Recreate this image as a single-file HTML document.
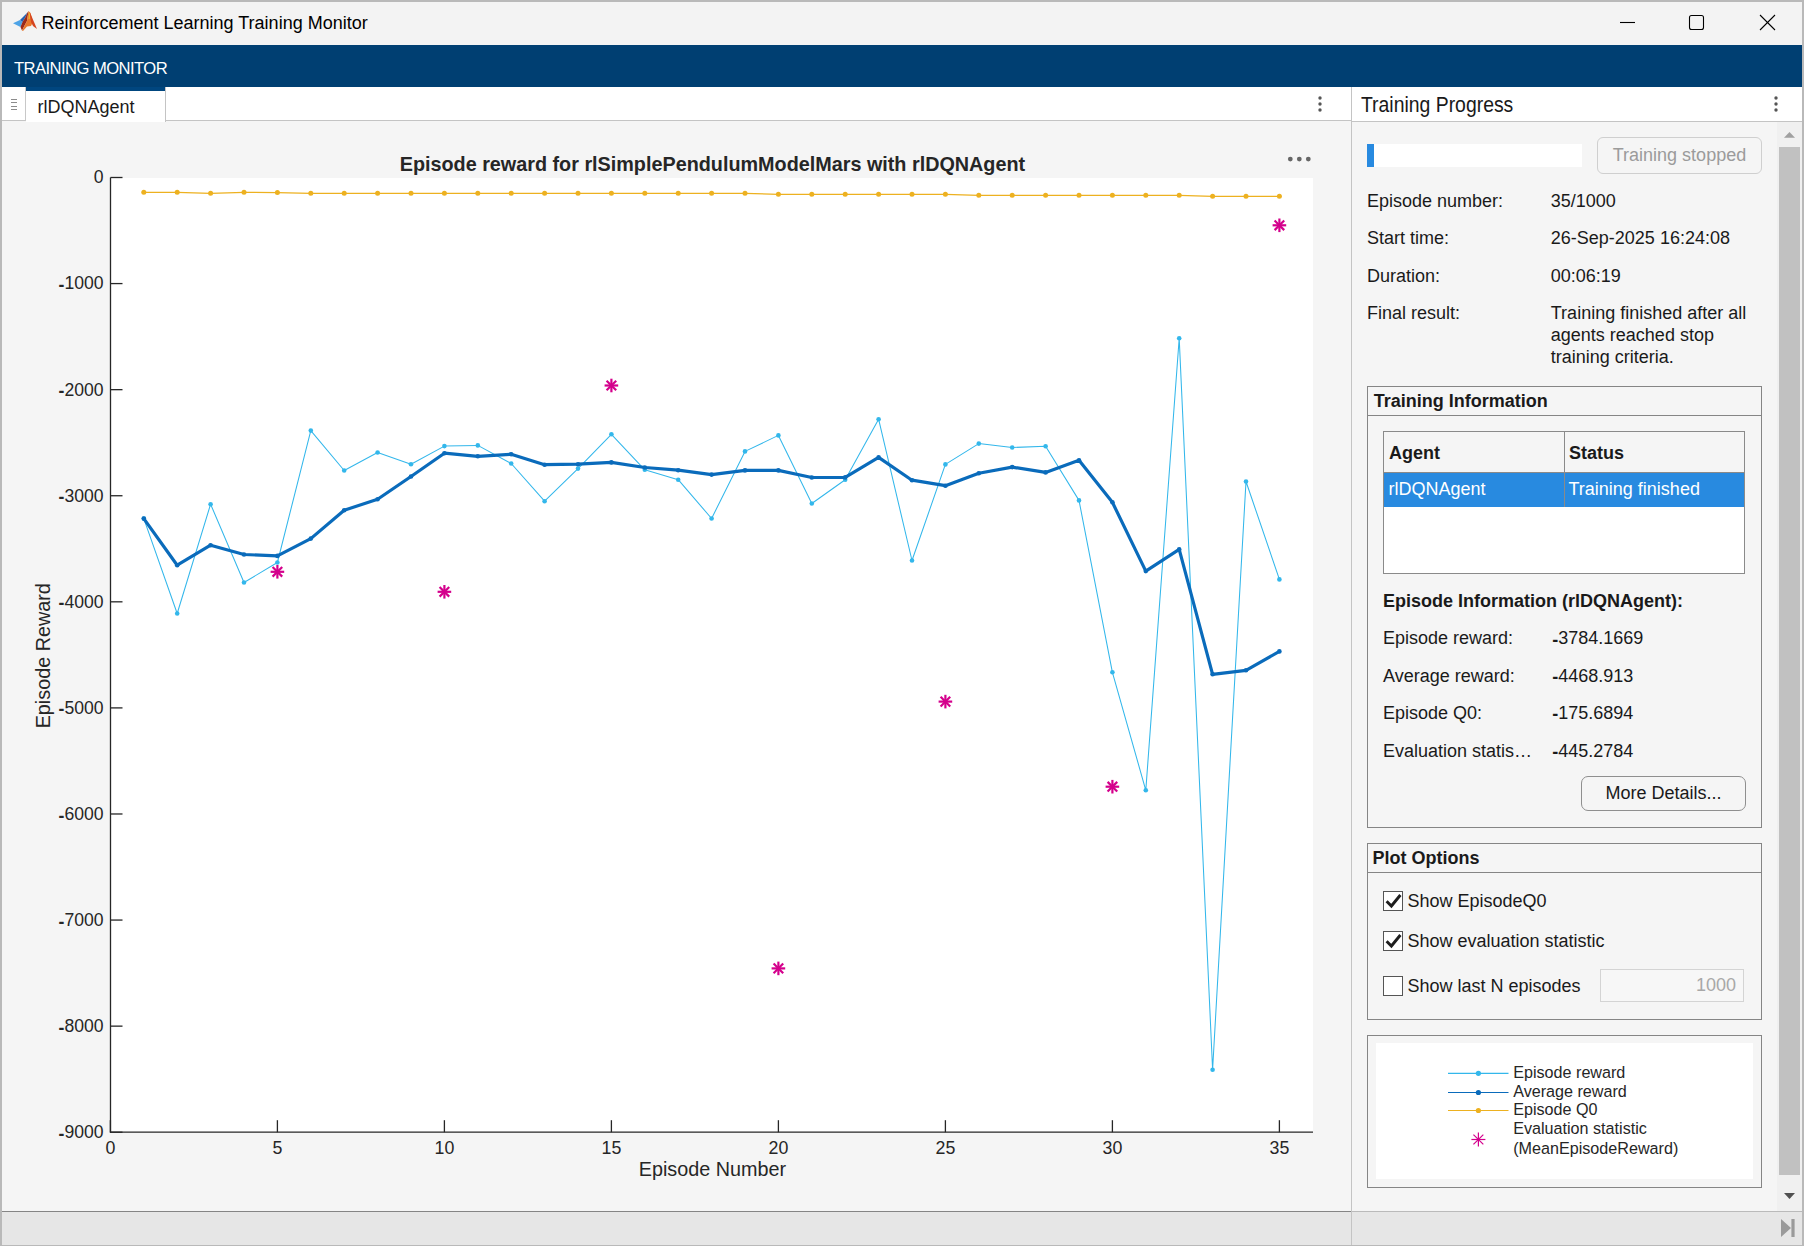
<!DOCTYPE html>
<html><head><meta charset="utf-8"><title>Reinforcement Learning Training Monitor</title>
<style>
html,body{margin:0;padding:0;width:1804px;height:1246px;overflow:hidden;background:#b9b9b9}
body{position:relative;font-family:"Liberation Sans", sans-serif}
.t{position:absolute;line-height:1;white-space:pre;font-family:"Liberation Sans", sans-serif}
.r{position:absolute}
</style></head><body>
<div class="r" style="left:0px;top:0px;width:1804px;height:1246px;background:#b9b9b9"></div>
<div class="r" style="left:2px;top:2px;width:1800px;height:1243px;background:#f5f5f5"></div>
<div class="r" style="left:2px;top:2px;width:1800px;height:43px;background:#f3f3f3"></div>
<svg class="r" style="left:12px;top:10px" width="27" height="23" viewBox="0 0 27 23">
<polygon points="1,13.3 8,10 10.5,12 8.5,17" fill="#4da3e6"/>
<polygon points="8,10 15.5,2.5 13,8 10.5,12" fill="#2563b5"/>
<polygon points="10.5,12 13,8 15.5,2.5 16.5,1 15,11 10,20.5 8.5,17" fill="#9c2a1a"/>
<polygon points="16.5,1 18.5,3 21,12 19,16 15,16.5 11,21 10,20.5 15,11" fill="#e9782c"/>
<polygon points="17,2 18,3.5 17.6,9 16.6,9" fill="#f5c431"/>
<polygon points="17.5,1.5 25,19 21,16 19,12" fill="#d5441f"/>
</svg>
<div class="t" style="left:41.50px;top:13.71px;font-size:18px;font-weight:400;color:#000;">Reinforcement Learning Training Monitor</div>
<svg class="r" style="left:1600px;top:0px" width="200" height="45">
<line x1="20" y1="22.5" x2="35" y2="22.5" stroke="#000" stroke-width="1.1"/>
<rect x="89.5" y="15.5" width="14" height="14" rx="2" ry="2" fill="none" stroke="#000" stroke-width="1.1"/>
<line x1="160" y1="15" x2="175" y2="30" stroke="#000" stroke-width="1.1"/>
<line x1="175" y1="15" x2="160" y2="30" stroke="#000" stroke-width="1.1"/>
</svg>
<div class="r" style="left:2px;top:45px;width:1800px;height:42px;background:#003f72"></div>
<div class="t" style="left:14.00px;top:61.30px;font-size:16.6px;font-weight:400;color:#fff;letter-spacing:-0.55px">TRAINING MONITOR</div>
<div class="r" style="left:2px;top:87px;width:1349px;height:34px;background:#fff;border-bottom:1px solid #c4c4c4;box-sizing:border-box"></div>
<div class="r" style="left:2px;top:87px;width:24px;height:34px;background:#fff;border-right:1px solid #c8c8c8;border-bottom:1px solid #c4c4c4;box-sizing:border-box"></div>
<div class="r" style="left:11px;top:99px;width:6px;height:1px;background:#8c8c8c"></div>
<div class="r" style="left:11px;top:102px;width:6px;height:1px;background:#8c8c8c"></div>
<div class="r" style="left:11px;top:106px;width:6px;height:1px;background:#8c8c8c"></div>
<div class="r" style="left:11px;top:109px;width:6px;height:1px;background:#8c8c8c"></div>
<div class="r" style="left:26px;top:87px;width:140px;height:35px;background:#fff;border-right:1px solid #c4c4c4;box-sizing:border-box"></div>
<div class="r" style="left:26px;top:87px;width:139px;height:4px;background:#00467f"></div>
<div class="t" style="left:37.40px;top:97.91px;font-size:18px;font-weight:400;color:#1a1a1a;">rlDQNAgent</div>
<svg class="r" style="left:1314px;top:95px" width="12" height="20"><circle cx="6" cy="3.0" r="1.7" fill="#555"/><circle cx="6" cy="9.0" r="1.7" fill="#555"/><circle cx="6" cy="15.0" r="1.7" fill="#555"/></svg>
<div class="r" style="left:1351px;top:87px;width:1px;height:1124px;background:#c4c4c4"></div>
<svg class="r" style="left:0;top:0" width="1351" height="1211"><rect x="110.5" y="178" width="1202.5" height="954.2" fill="#fff"/><polyline points="143.8,192.3 177.2,192.3 210.6,193.3 244.0,192.3 277.4,192.6 310.8,193.3 344.2,193.3 377.6,193.3 411.0,193.3 444.4,193.3 477.8,193.3 511.2,193.3 544.6,193.3 578.0,193.3 611.4,193.3 644.8,193.3 678.2,193.3 711.6,193.3 745.0,193.3 778.4,194.3 811.8,194.3 845.2,194.3 878.6,194.3 912.0,194.3 945.4,194.3 978.8,195.3 1012.2,195.3 1045.6,195.3 1079.0,195.3 1112.4,195.3 1145.8,195.3 1179.2,195.3 1212.6,196.3 1246.0,196.3 1279.4,196.3" fill="none" stroke="#EDB120" stroke-width="1.3" stroke-linejoin="round"/><circle cx="143.8" cy="192.3" r="2.5" fill="#EDB120"/><circle cx="177.2" cy="192.3" r="2.5" fill="#EDB120"/><circle cx="210.6" cy="193.3" r="2.5" fill="#EDB120"/><circle cx="244.0" cy="192.3" r="2.5" fill="#EDB120"/><circle cx="277.4" cy="192.6" r="2.5" fill="#EDB120"/><circle cx="310.8" cy="193.3" r="2.5" fill="#EDB120"/><circle cx="344.2" cy="193.3" r="2.5" fill="#EDB120"/><circle cx="377.6" cy="193.3" r="2.5" fill="#EDB120"/><circle cx="411.0" cy="193.3" r="2.5" fill="#EDB120"/><circle cx="444.4" cy="193.3" r="2.5" fill="#EDB120"/><circle cx="477.8" cy="193.3" r="2.5" fill="#EDB120"/><circle cx="511.2" cy="193.3" r="2.5" fill="#EDB120"/><circle cx="544.6" cy="193.3" r="2.5" fill="#EDB120"/><circle cx="578.0" cy="193.3" r="2.5" fill="#EDB120"/><circle cx="611.4" cy="193.3" r="2.5" fill="#EDB120"/><circle cx="644.8" cy="193.3" r="2.5" fill="#EDB120"/><circle cx="678.2" cy="193.3" r="2.5" fill="#EDB120"/><circle cx="711.6" cy="193.3" r="2.5" fill="#EDB120"/><circle cx="745.0" cy="193.3" r="2.5" fill="#EDB120"/><circle cx="778.4" cy="194.3" r="2.5" fill="#EDB120"/><circle cx="811.8" cy="194.3" r="2.5" fill="#EDB120"/><circle cx="845.2" cy="194.3" r="2.5" fill="#EDB120"/><circle cx="878.6" cy="194.3" r="2.5" fill="#EDB120"/><circle cx="912.0" cy="194.3" r="2.5" fill="#EDB120"/><circle cx="945.4" cy="194.3" r="2.5" fill="#EDB120"/><circle cx="978.8" cy="195.3" r="2.5" fill="#EDB120"/><circle cx="1012.2" cy="195.3" r="2.5" fill="#EDB120"/><circle cx="1045.6" cy="195.3" r="2.5" fill="#EDB120"/><circle cx="1079.0" cy="195.3" r="2.5" fill="#EDB120"/><circle cx="1112.4" cy="195.3" r="2.5" fill="#EDB120"/><circle cx="1145.8" cy="195.3" r="2.5" fill="#EDB120"/><circle cx="1179.2" cy="195.3" r="2.5" fill="#EDB120"/><circle cx="1212.6" cy="196.3" r="2.5" fill="#EDB120"/><circle cx="1246.0" cy="196.3" r="2.5" fill="#EDB120"/><circle cx="1279.4" cy="196.3" r="2.5" fill="#EDB120"/><polyline points="143.8,518.6 177.2,613.5 210.6,504.2 244.0,582.5 277.4,562.5 310.8,430.6 344.2,470.5 377.6,452.5 411.0,464.3 444.4,446.1 477.8,445.4 511.2,463.5 544.6,501.2 578.0,468.6 611.4,434.3 644.8,469.8 678.2,479.7 711.6,518.5 745.0,451.4 778.4,435.4 811.8,503.5 845.2,479.7 878.6,419.2 912.0,560.5 945.4,464.4 978.8,443.6 1012.2,447.5 1045.6,446.3 1079.0,500.4 1112.4,672.3 1145.8,790.3 1179.2,338.2 1212.6,1069.7 1246.0,481.5 1279.4,579.4" fill="none" stroke="#33B7EB" stroke-width="1.05" stroke-linejoin="round"/><circle cx="143.8" cy="518.6" r="2.3" fill="#33B7EB"/><circle cx="177.2" cy="613.5" r="2.3" fill="#33B7EB"/><circle cx="210.6" cy="504.2" r="2.3" fill="#33B7EB"/><circle cx="244.0" cy="582.5" r="2.3" fill="#33B7EB"/><circle cx="277.4" cy="562.5" r="2.3" fill="#33B7EB"/><circle cx="310.8" cy="430.6" r="2.3" fill="#33B7EB"/><circle cx="344.2" cy="470.5" r="2.3" fill="#33B7EB"/><circle cx="377.6" cy="452.5" r="2.3" fill="#33B7EB"/><circle cx="411.0" cy="464.3" r="2.3" fill="#33B7EB"/><circle cx="444.4" cy="446.1" r="2.3" fill="#33B7EB"/><circle cx="477.8" cy="445.4" r="2.3" fill="#33B7EB"/><circle cx="511.2" cy="463.5" r="2.3" fill="#33B7EB"/><circle cx="544.6" cy="501.2" r="2.3" fill="#33B7EB"/><circle cx="578.0" cy="468.6" r="2.3" fill="#33B7EB"/><circle cx="611.4" cy="434.3" r="2.3" fill="#33B7EB"/><circle cx="644.8" cy="469.8" r="2.3" fill="#33B7EB"/><circle cx="678.2" cy="479.7" r="2.3" fill="#33B7EB"/><circle cx="711.6" cy="518.5" r="2.3" fill="#33B7EB"/><circle cx="745.0" cy="451.4" r="2.3" fill="#33B7EB"/><circle cx="778.4" cy="435.4" r="2.3" fill="#33B7EB"/><circle cx="811.8" cy="503.5" r="2.3" fill="#33B7EB"/><circle cx="845.2" cy="479.7" r="2.3" fill="#33B7EB"/><circle cx="878.6" cy="419.2" r="2.3" fill="#33B7EB"/><circle cx="912.0" cy="560.5" r="2.3" fill="#33B7EB"/><circle cx="945.4" cy="464.4" r="2.3" fill="#33B7EB"/><circle cx="978.8" cy="443.6" r="2.3" fill="#33B7EB"/><circle cx="1012.2" cy="447.5" r="2.3" fill="#33B7EB"/><circle cx="1045.6" cy="446.3" r="2.3" fill="#33B7EB"/><circle cx="1079.0" cy="500.4" r="2.3" fill="#33B7EB"/><circle cx="1112.4" cy="672.3" r="2.3" fill="#33B7EB"/><circle cx="1145.8" cy="790.3" r="2.3" fill="#33B7EB"/><circle cx="1179.2" cy="338.2" r="2.3" fill="#33B7EB"/><circle cx="1212.6" cy="1069.7" r="2.3" fill="#33B7EB"/><circle cx="1246.0" cy="481.5" r="2.3" fill="#33B7EB"/><circle cx="1279.4" cy="579.4" r="2.3" fill="#33B7EB"/><polyline points="143.8,518.6 177.2,565.2 210.6,545.2 244.0,554.5 277.4,555.9 310.8,538.6 344.2,510.2 377.6,499.3 411.0,476.5 444.4,453.2 477.8,456.3 511.2,454.2 544.6,464.7 578.0,464.2 611.4,462.4 644.8,467.5 678.2,470.2 711.6,474.6 745.0,470.4 778.4,470.4 811.8,477.5 845.2,477.4 878.6,457.4 912.0,480.2 945.4,485.7 978.8,473.2 1012.2,467.1 1045.6,472.4 1079.0,460.2 1112.4,502.3 1145.8,571.1 1179.2,549.4 1212.6,674.3 1246.0,670.3 1279.4,651.4" fill="none" stroke="#0a6bbb" stroke-width="3.2" stroke-linejoin="round"/><circle cx="143.8" cy="518.6" r="2.3" fill="#0a6bbb"/><circle cx="177.2" cy="565.2" r="2.3" fill="#0a6bbb"/><circle cx="210.6" cy="545.2" r="2.3" fill="#0a6bbb"/><circle cx="244.0" cy="554.5" r="2.3" fill="#0a6bbb"/><circle cx="277.4" cy="555.9" r="2.3" fill="#0a6bbb"/><circle cx="310.8" cy="538.6" r="2.3" fill="#0a6bbb"/><circle cx="344.2" cy="510.2" r="2.3" fill="#0a6bbb"/><circle cx="377.6" cy="499.3" r="2.3" fill="#0a6bbb"/><circle cx="411.0" cy="476.5" r="2.3" fill="#0a6bbb"/><circle cx="444.4" cy="453.2" r="2.3" fill="#0a6bbb"/><circle cx="477.8" cy="456.3" r="2.3" fill="#0a6bbb"/><circle cx="511.2" cy="454.2" r="2.3" fill="#0a6bbb"/><circle cx="544.6" cy="464.7" r="2.3" fill="#0a6bbb"/><circle cx="578.0" cy="464.2" r="2.3" fill="#0a6bbb"/><circle cx="611.4" cy="462.4" r="2.3" fill="#0a6bbb"/><circle cx="644.8" cy="467.5" r="2.3" fill="#0a6bbb"/><circle cx="678.2" cy="470.2" r="2.3" fill="#0a6bbb"/><circle cx="711.6" cy="474.6" r="2.3" fill="#0a6bbb"/><circle cx="745.0" cy="470.4" r="2.3" fill="#0a6bbb"/><circle cx="778.4" cy="470.4" r="2.3" fill="#0a6bbb"/><circle cx="811.8" cy="477.5" r="2.3" fill="#0a6bbb"/><circle cx="845.2" cy="477.4" r="2.3" fill="#0a6bbb"/><circle cx="878.6" cy="457.4" r="2.3" fill="#0a6bbb"/><circle cx="912.0" cy="480.2" r="2.3" fill="#0a6bbb"/><circle cx="945.4" cy="485.7" r="2.3" fill="#0a6bbb"/><circle cx="978.8" cy="473.2" r="2.3" fill="#0a6bbb"/><circle cx="1012.2" cy="467.1" r="2.3" fill="#0a6bbb"/><circle cx="1045.6" cy="472.4" r="2.3" fill="#0a6bbb"/><circle cx="1079.0" cy="460.2" r="2.3" fill="#0a6bbb"/><circle cx="1112.4" cy="502.3" r="2.3" fill="#0a6bbb"/><circle cx="1145.8" cy="571.1" r="2.3" fill="#0a6bbb"/><circle cx="1179.2" cy="549.4" r="2.3" fill="#0a6bbb"/><circle cx="1212.6" cy="674.3" r="2.3" fill="#0a6bbb"/><circle cx="1246.0" cy="670.3" r="2.3" fill="#0a6bbb"/><circle cx="1279.4" cy="651.4" r="2.3" fill="#0a6bbb"/><line x1="270.60" y1="571.80" x2="284.20" y2="571.80" stroke="#D4008C" stroke-width="2.2"/><line x1="272.59" y1="566.99" x2="282.21" y2="576.61" stroke="#D4008C" stroke-width="2.2"/><line x1="277.40" y1="565.00" x2="277.40" y2="578.60" stroke="#D4008C" stroke-width="2.2"/><line x1="282.21" y1="566.99" x2="272.59" y2="576.61" stroke="#D4008C" stroke-width="2.2"/><line x1="437.60" y1="591.80" x2="451.20" y2="591.80" stroke="#D4008C" stroke-width="2.2"/><line x1="439.59" y1="586.99" x2="449.21" y2="596.61" stroke="#D4008C" stroke-width="2.2"/><line x1="444.40" y1="585.00" x2="444.40" y2="598.60" stroke="#D4008C" stroke-width="2.2"/><line x1="449.21" y1="586.99" x2="439.59" y2="596.61" stroke="#D4008C" stroke-width="2.2"/><line x1="604.60" y1="385.50" x2="618.20" y2="385.50" stroke="#D4008C" stroke-width="2.2"/><line x1="606.59" y1="380.69" x2="616.21" y2="390.31" stroke="#D4008C" stroke-width="2.2"/><line x1="611.40" y1="378.70" x2="611.40" y2="392.30" stroke="#D4008C" stroke-width="2.2"/><line x1="616.21" y1="380.69" x2="606.59" y2="390.31" stroke="#D4008C" stroke-width="2.2"/><line x1="771.60" y1="968.40" x2="785.20" y2="968.40" stroke="#D4008C" stroke-width="2.2"/><line x1="773.59" y1="963.59" x2="783.21" y2="973.21" stroke="#D4008C" stroke-width="2.2"/><line x1="778.40" y1="961.60" x2="778.40" y2="975.20" stroke="#D4008C" stroke-width="2.2"/><line x1="783.21" y1="963.59" x2="773.59" y2="973.21" stroke="#D4008C" stroke-width="2.2"/><line x1="938.60" y1="701.60" x2="952.20" y2="701.60" stroke="#D4008C" stroke-width="2.2"/><line x1="940.59" y1="696.79" x2="950.21" y2="706.41" stroke="#D4008C" stroke-width="2.2"/><line x1="945.40" y1="694.80" x2="945.40" y2="708.40" stroke="#D4008C" stroke-width="2.2"/><line x1="950.21" y1="696.79" x2="940.59" y2="706.41" stroke="#D4008C" stroke-width="2.2"/><line x1="1105.60" y1="786.70" x2="1119.20" y2="786.70" stroke="#D4008C" stroke-width="2.2"/><line x1="1107.59" y1="781.89" x2="1117.21" y2="791.51" stroke="#D4008C" stroke-width="2.2"/><line x1="1112.40" y1="779.90" x2="1112.40" y2="793.50" stroke="#D4008C" stroke-width="2.2"/><line x1="1117.21" y1="781.89" x2="1107.59" y2="791.51" stroke="#D4008C" stroke-width="2.2"/><line x1="1272.60" y1="225.30" x2="1286.20" y2="225.30" stroke="#D4008C" stroke-width="2.2"/><line x1="1274.59" y1="220.49" x2="1284.21" y2="230.11" stroke="#D4008C" stroke-width="2.2"/><line x1="1279.40" y1="218.50" x2="1279.40" y2="232.10" stroke="#D4008C" stroke-width="2.2"/><line x1="1284.21" y1="220.49" x2="1274.59" y2="230.11" stroke="#D4008C" stroke-width="2.2"/><line x1="110.5" y1="177.5" x2="110.5" y2="1132.8" stroke="#262626" stroke-width="1.3"/><line x1="109.9" y1="1132.2" x2="1313" y2="1132.2" stroke="#262626" stroke-width="1.3"/><line x1="110.5" y1="177.50" x2="122.5" y2="177.50" stroke="#262626" stroke-width="1.3"/><line x1="110.5" y1="283.58" x2="122.5" y2="283.58" stroke="#262626" stroke-width="1.3"/><line x1="110.5" y1="389.66" x2="122.5" y2="389.66" stroke="#262626" stroke-width="1.3"/><line x1="110.5" y1="495.74" x2="122.5" y2="495.74" stroke="#262626" stroke-width="1.3"/><line x1="110.5" y1="601.82" x2="122.5" y2="601.82" stroke="#262626" stroke-width="1.3"/><line x1="110.5" y1="707.90" x2="122.5" y2="707.90" stroke="#262626" stroke-width="1.3"/><line x1="110.5" y1="813.98" x2="122.5" y2="813.98" stroke="#262626" stroke-width="1.3"/><line x1="110.5" y1="920.06" x2="122.5" y2="920.06" stroke="#262626" stroke-width="1.3"/><line x1="110.5" y1="1026.14" x2="122.5" y2="1026.14" stroke="#262626" stroke-width="1.3"/><line x1="110.5" y1="1132.22" x2="122.5" y2="1132.22" stroke="#262626" stroke-width="1.3"/><line x1="110.40" y1="1132.2" x2="110.40" y2="1120.2" stroke="#262626" stroke-width="1.3"/><line x1="277.40" y1="1132.2" x2="277.40" y2="1120.2" stroke="#262626" stroke-width="1.3"/><line x1="444.40" y1="1132.2" x2="444.40" y2="1120.2" stroke="#262626" stroke-width="1.3"/><line x1="611.40" y1="1132.2" x2="611.40" y2="1120.2" stroke="#262626" stroke-width="1.3"/><line x1="778.40" y1="1132.2" x2="778.40" y2="1120.2" stroke="#262626" stroke-width="1.3"/><line x1="945.40" y1="1132.2" x2="945.40" y2="1120.2" stroke="#262626" stroke-width="1.3"/><line x1="1112.40" y1="1132.2" x2="1112.40" y2="1120.2" stroke="#262626" stroke-width="1.3"/><line x1="1279.40" y1="1132.2" x2="1279.40" y2="1120.2" stroke="#262626" stroke-width="1.3"/><circle cx="1290.3" cy="159.1" r="2.4" fill="#666"/><circle cx="1299.3" cy="159.1" r="2.4" fill="#666"/><circle cx="1308.3" cy="159.1" r="2.4" fill="#666"/></svg>
<div class="t" style="left:0px;width:103.6px;text-align:right;top:169.40px;font-size:17.6px;color:#262626">0</div>
<div class="t" style="left:0px;width:103.6px;text-align:right;top:275.48px;font-size:17.6px;color:#262626"><span style="position:relative;top:1.7px;font-weight:700">-</span>1000</div>
<div class="t" style="left:0px;width:103.6px;text-align:right;top:381.56px;font-size:17.6px;color:#262626"><span style="position:relative;top:1.7px;font-weight:700">-</span>2000</div>
<div class="t" style="left:0px;width:103.6px;text-align:right;top:487.64px;font-size:17.6px;color:#262626"><span style="position:relative;top:1.7px;font-weight:700">-</span>3000</div>
<div class="t" style="left:0px;width:103.6px;text-align:right;top:593.72px;font-size:17.6px;color:#262626"><span style="position:relative;top:1.7px;font-weight:700">-</span>4000</div>
<div class="t" style="left:0px;width:103.6px;text-align:right;top:699.80px;font-size:17.6px;color:#262626"><span style="position:relative;top:1.7px;font-weight:700">-</span>5000</div>
<div class="t" style="left:0px;width:103.6px;text-align:right;top:805.88px;font-size:17.6px;color:#262626"><span style="position:relative;top:1.7px;font-weight:700">-</span>6000</div>
<div class="t" style="left:0px;width:103.6px;text-align:right;top:911.96px;font-size:17.6px;color:#262626"><span style="position:relative;top:1.7px;font-weight:700">-</span>7000</div>
<div class="t" style="left:0px;width:103.6px;text-align:right;top:1018.04px;font-size:17.6px;color:#262626"><span style="position:relative;top:1.7px;font-weight:700">-</span>8000</div>
<div class="t" style="left:0px;width:103.6px;text-align:right;top:1124.12px;font-size:17.6px;color:#262626"><span style="position:relative;top:1.7px;font-weight:700">-</span>9000</div>
<div class="t" style="left:70.40px;width:80px;text-align:center;top:1139.63px;font-size:17.8px;color:#262626">0</div>
<div class="t" style="left:237.40px;width:80px;text-align:center;top:1139.63px;font-size:17.8px;color:#262626">5</div>
<div class="t" style="left:404.40px;width:80px;text-align:center;top:1139.63px;font-size:17.8px;color:#262626">10</div>
<div class="t" style="left:571.40px;width:80px;text-align:center;top:1139.63px;font-size:17.8px;color:#262626">15</div>
<div class="t" style="left:738.40px;width:80px;text-align:center;top:1139.63px;font-size:17.8px;color:#262626">20</div>
<div class="t" style="left:905.40px;width:80px;text-align:center;top:1139.63px;font-size:17.8px;color:#262626">25</div>
<div class="t" style="left:1072.40px;width:80px;text-align:center;top:1139.63px;font-size:17.8px;color:#262626">30</div>
<div class="t" style="left:1239.40px;width:80px;text-align:center;top:1139.63px;font-size:17.8px;color:#262626">35</div>
<div class="t" style="left:312.45000000000005px;width:800px;text-align:center;top:154.74px;font-size:19.8px;font-weight:700;color:#262626">Episode reward for rlSimplePendulumModelMars with rlDQNAgent</div>
<div class="t" style="left:412.4px;width:600px;text-align:center;top:1159.74px;font-size:19.8px;color:#262626">Episode Number</div>
<div class="t" style="left:-249px;width:600px;text-align:center;top:638.54px;font-size:19.8px;color:#262626;transform-origin:300px 16.76px;transform:rotate(-90deg)">Episode Reward</div>
<div class="r" style="left:1352px;top:87px;width:450px;height:35px;background:#fff;border-bottom:1px solid #c4c4c4;box-sizing:border-box"></div>
<div class="t" style="left:1361.00px;top:96.33px;font-size:19.4px;font-weight:400;color:#1a1a1a;transform:scaleY(1.12);transform-origin:0 16.42px">Training Progress</div>
<svg class="r" style="left:1770px;top:95px" width="12" height="20"><circle cx="6" cy="3.0" r="1.7" fill="#555"/><circle cx="6" cy="9.0" r="1.7" fill="#555"/><circle cx="6" cy="15.0" r="1.7" fill="#555"/></svg>
<div class="r" style="left:1777px;top:122px;width:25px;height:1089px;background:#f0f0f0"></div>
<div class="r" style="left:1779px;top:147px;width:21px;height:1028px;background:#c1c1c1"></div>
<svg class="r" style="left:1777px;top:122px" width="25" height="1089"><polygon points="7,15.8 18,15.8 12.5,10" fill="#a0a0a0"/><polygon points="7,1071 18,1071 12.5,1077" fill="#505050"/></svg>
<div class="r" style="left:1367px;top:144px;width:215px;height:23px;background:#fff"></div>
<div class="r" style="left:1367px;top:144px;width:7px;height:23px;background:#288ae0"></div>
<div class="r" style="left:1597px;top:137px;width:165px;height:37px;border:1px solid #cfcfcf;border-radius:6px;box-sizing:border-box"></div>
<div class="t" style="left:1612.75px;top:146.31px;font-size:18px;font-weight:400;color:#9b9b9b;">Training stopped</div>
<div class="t" style="left:1367.00px;top:192.31px;font-size:18px;font-weight:400;color:#1a1a1a;">Episode number:</div>
<div class="t" style="left:1550.80px;top:192.31px;font-size:18px;font-weight:400;color:#1a1a1a;">35/1000</div>
<div class="t" style="left:1367.00px;top:229.31px;font-size:18px;font-weight:400;color:#1a1a1a;">Start time:</div>
<div class="t" style="left:1550.80px;top:229.31px;font-size:18px;font-weight:400;color:#1a1a1a;">26-Sep-2025 16:24:08</div>
<div class="t" style="left:1367.00px;top:266.61px;font-size:18px;font-weight:400;color:#1a1a1a;">Duration:</div>
<div class="t" style="left:1550.80px;top:266.61px;font-size:18px;font-weight:400;color:#1a1a1a;">00:06:19</div>
<div class="t" style="left:1367.00px;top:304.41px;font-size:18px;font-weight:400;color:#1a1a1a;">Final result:</div>
<div class="t" style="left:1550.80px;top:303.51px;font-size:18px;font-weight:400;color:#1a1a1a;">Training finished after all</div>
<div class="t" style="left:1550.80px;top:326.21px;font-size:18px;font-weight:400;color:#1a1a1a;">agents reached stop</div>
<div class="t" style="left:1550.80px;top:348.31px;font-size:18px;font-weight:400;color:#1a1a1a;">training criteria.</div>
<div class="r" style="left:1367px;top:386px;width:395px;height:442px;border:1px solid #858585;box-sizing:border-box"></div>
<div class="r" style="left:1368px;top:415px;width:393px;height:1px;background:#858585"></div>
<div class="t" style="left:1373.80px;top:392.21px;font-size:18px;font-weight:700;color:#1a1a1a;">Training Information</div>
<div class="r" style="left:1383px;top:431px;width:362px;height:143px;background:#fff;border:1px solid #8a8a8a;box-sizing:border-box"></div>
<div class="r" style="left:1384px;top:432px;width:360px;height:40px;background:#f5f5f5"></div>
<div class="r" style="left:1384px;top:472px;width:360px;height:1px;background:#8a8a8a"></div>
<div class="r" style="left:1384px;top:473px;width:360px;height:34px;background:#288ae0"></div>
<div class="r" style="left:1564px;top:432px;width:1px;height:75px;background:#8a8a8a"></div>
<div class="t" style="left:1389.00px;top:444.11px;font-size:18px;font-weight:700;color:#1a1a1a;">Agent</div>
<div class="t" style="left:1569.00px;top:444.11px;font-size:18px;font-weight:700;color:#1a1a1a;">Status</div>
<div class="t" style="left:1388.50px;top:480.11px;font-size:18px;font-weight:400;color:#fff;">rlDQNAgent</div>
<div class="t" style="left:1568.50px;top:480.11px;font-size:18px;font-weight:400;color:#fff;">Training finished</div>
<div class="t" style="left:1383.00px;top:592.01px;font-size:18px;font-weight:700;color:#1a1a1a;">Episode Information (rlDQNAgent):</div>
<div class="t" style="left:1383.00px;top:629.01px;font-size:18px;font-weight:400;color:#1a1a1a;">Episode reward:</div>
<div class="t" style="left:1552.30px;top:629.01px;font-size:18px;font-weight:400;color:#1a1a1a;"><span style="position:relative;top:1.5px;font-weight:700">-</span>3784.1669</div>
<div class="t" style="left:1383.00px;top:666.71px;font-size:18px;font-weight:400;color:#1a1a1a;">Average reward:</div>
<div class="t" style="left:1552.30px;top:666.71px;font-size:18px;font-weight:400;color:#1a1a1a;"><span style="position:relative;top:1.5px;font-weight:700">-</span>4468.913</div>
<div class="t" style="left:1383.00px;top:703.71px;font-size:18px;font-weight:400;color:#1a1a1a;">Episode Q0:</div>
<div class="t" style="left:1552.30px;top:703.71px;font-size:18px;font-weight:400;color:#1a1a1a;"><span style="position:relative;top:1.5px;font-weight:700">-</span>175.6894</div>
<div class="t" style="left:1383.00px;top:741.51px;font-size:18px;font-weight:400;color:#1a1a1a;">Evaluation statis…</div>
<div class="t" style="left:1552.30px;top:741.51px;font-size:18px;font-weight:400;color:#1a1a1a;"><span style="position:relative;top:1.5px;font-weight:700">-</span>445.2784</div>
<div class="r" style="left:1581px;top:776px;width:165px;height:35px;border:1px solid #8f8f8f;border-radius:7px;box-sizing:border-box;background:#f5f5f5"></div>
<div class="t" style="left:1581px;width:165px;text-align:center;top:783.66px;font-size:18px;color:#1a1a1a">More Details...</div>
<div class="r" style="left:1367px;top:843px;width:395px;height:177px;border:1px solid #858585;box-sizing:border-box"></div>
<div class="r" style="left:1368px;top:872px;width:393px;height:1px;background:#858585"></div>
<div class="t" style="left:1372.50px;top:849.41px;font-size:18px;font-weight:700;color:#1a1a1a;">Plot Options</div>
<div class="r" style="left:1383px;top:891px;width:20px;height:20px;background:#fff;border:1px solid #555;box-sizing:border-box"></div>
<svg class="r" style="left:1383px;top:891px" width="20" height="20"><polyline points="3.6,10.2 8.4,15 17.4,4" fill="none" stroke="#1e1e1e" stroke-width="2.9"/></svg>
<div class="t" style="left:1407.50px;top:892.21px;font-size:18px;font-weight:400;color:#1a1a1a;">Show EpisodeQ0</div>
<div class="r" style="left:1383px;top:931px;width:20px;height:20px;background:#fff;border:1px solid #555;box-sizing:border-box"></div>
<svg class="r" style="left:1383px;top:931px" width="20" height="20"><polyline points="3.6,10.2 8.4,15 17.4,4" fill="none" stroke="#1e1e1e" stroke-width="2.9"/></svg>
<div class="t" style="left:1407.50px;top:931.91px;font-size:18px;font-weight:400;color:#1a1a1a;">Show evaluation statistic</div>
<div class="r" style="left:1383px;top:976px;width:20px;height:20px;background:#fff;border:1px solid #555;box-sizing:border-box"></div>
<div class="t" style="left:1407.50px;top:976.51px;font-size:18px;font-weight:400;color:#1a1a1a;">Show last N episodes</div>
<div class="r" style="left:1600px;top:969px;width:144px;height:33px;background:#f7f7f7;border:1px solid #d4d4d4;box-sizing:border-box"></div>
<div class="t" style="left:1600px;width:136px;text-align:right;top:976.46px;font-size:18px;color:#a8a8a8">1000</div>
<div class="r" style="left:1367px;top:1035px;width:395px;height:153px;border:1px solid #858585;box-sizing:border-box"></div>
<div class="r" style="left:1376px;top:1043px;width:377px;height:136px;background:#fff"></div>
<svg class="r" style="left:0;top:0" width="1804" height="1246"><line x1="1448" y1="1073.3" x2="1508.5" y2="1073.3" stroke="#33B7EB" stroke-width="1.2"/><circle cx="1478.4" cy="1073.3" r="2.6" fill="#33B7EB"/><line x1="1448" y1="1092.5" x2="1508.5" y2="1092.5" stroke="#0a6bbb" stroke-width="1.2"/><circle cx="1478.4" cy="1092.5" r="2.6" fill="#0a6bbb"/><line x1="1448" y1="1110.5" x2="1508.5" y2="1110.5" stroke="#EDB120" stroke-width="1.2"/><circle cx="1478.4" cy="1110.5" r="2.6" fill="#EDB120"/><line x1="1471.40" y1="1139.50" x2="1485.40" y2="1139.50" stroke="#D4008C" stroke-width="1.2"/><line x1="1473.45" y1="1134.55" x2="1483.35" y2="1144.45" stroke="#D4008C" stroke-width="1.2"/><line x1="1478.40" y1="1132.50" x2="1478.40" y2="1146.50" stroke="#D4008C" stroke-width="1.2"/><line x1="1483.35" y1="1134.55" x2="1473.45" y2="1144.45" stroke="#D4008C" stroke-width="1.2"/></svg>
<div class="t" style="left:1513.20px;top:1063.78px;font-size:16.15px;font-weight:400;color:#262626;">Episode reward</div>
<div class="t" style="left:1513.20px;top:1082.58px;font-size:16.15px;font-weight:400;color:#262626;">Average reward</div>
<div class="t" style="left:1513.20px;top:1101.48px;font-size:16.15px;font-weight:400;color:#262626;">Episode Q0</div>
<div class="t" style="left:1513.20px;top:1120.38px;font-size:16.15px;font-weight:400;color:#262626;">Evaluation statistic</div>
<div class="t" style="left:1513.20px;top:1140.48px;font-size:16.15px;font-weight:400;color:#262626;">(MeanEpisodeReward)</div>
<div class="r" style="left:2px;top:1211px;width:1800px;height:34px;background:#e6e6e6"></div>
<div class="r" style="left:2px;top:1211px;width:1349px;height:1px;background:#858585"></div>
<div class="r" style="left:1352px;top:1211px;width:450px;height:1px;background:#bababa"></div>
<div class="r" style="left:1351px;top:1211px;width:1px;height:34px;background:#c4c4c4"></div>
<svg class="r" style="left:1778px;top:1216px" width="22" height="24"><polygon points="3,3 3,21 13,12" fill="#9a9a9a"/><rect x="13.4" y="3" width="3.2" height="18" fill="#9a9a9a"/></svg>
</body></html>
